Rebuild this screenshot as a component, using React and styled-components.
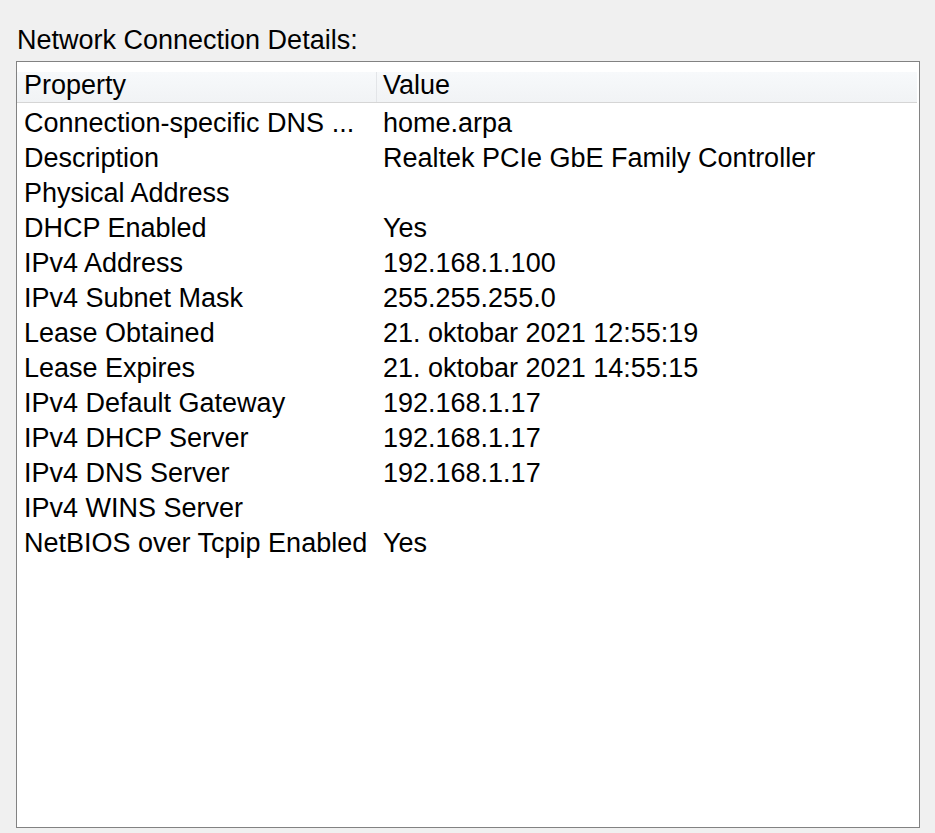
import React from 'react';
import styled, { createGlobalStyle } from "styled-components";

const Global = createGlobalStyle`
html, body {
  margin: 0;
  padding: 0;
  background: #f0f0f0;
}
`
const Pagina = styled.div`
display: flex;
flex-direction: column;
box-sizing: border-box;
height: 100vh;
padding: 25px 15px 5px 16px;
font-family: "Liberation Sans", Arial, sans-serif;
font-size: 27px;
color: #000;
`
const Titulo = styled.div`
line-height: 31px;
margin: 0 0 5px 1px;
`
const Caixa = styled.div`
flex: 1;
display: flex;
flex-direction: column;
background: #fff;
border: 1px solid #828282;
padding-top: 10px;
`
const Cabecalho = styled.div`
display: grid;
grid-template-columns: 360px 1fr;
margin-right: 2px;
background: linear-gradient(#f7f9fb, #f1f3f5);
border-bottom: 1px solid #d5d5d5;
`
const ColunaTitulo = styled.div`
height: 30px;
box-sizing: border-box;
line-height: 26px;
padding: 0 0 4px ${props => props.$divisor ? "7px" : "6px"};
border-right: ${props => props.$divisor ? "1px solid #e3e5e8" : "none"};
`
const Lista = styled.div`
padding-top: 3px;
`
const Linha = styled.div`
display: grid;
grid-template-columns: 360px 1fr;
line-height: 35px;
height: 35px;
`
const Celula = styled.div`
padding-left: ${props => props.$valor ? "6px" : "7px"};
white-space: nowrap;
overflow: hidden;
`

const dados = [
  ["Connection-specific DNS ...", "home.arpa"],
  ["Description", "Realtek PCIe GbE Family Controller"],
  ["Physical Address", ""],
  ["DHCP Enabled", "Yes"],
  ["IPv4 Address", "192.168.1.100"],
  ["IPv4 Subnet Mask", "255.255.255.0"],
  ["Lease Obtained", "21. oktobar 2021 12:55:19"],
  ["Lease Expires", "21. oktobar 2021 14:55:15"],
  ["IPv4 Default Gateway", "192.168.1.17"],
  ["IPv4 DHCP Server", "192.168.1.17"],
  ["IPv4 DNS Server", "192.168.1.17"],
  ["IPv4 WINS Server", ""],
  ["NetBIOS over Tcpip Enabled", "Yes"],
]

export default function App() {
  return (
    <Pagina>
      <Global />
      <Titulo>Network Connection Details:</Titulo>
      <Caixa>
        <Cabecalho>
          <ColunaTitulo $divisor>Property</ColunaTitulo>
          <ColunaTitulo>Value</ColunaTitulo>
        </Cabecalho>
        <Lista>
          {dados.map(([prop, valor]) => (
            <Linha key={prop}>
              <Celula>{prop}</Celula>
              <Celula $valor>{valor}</Celula>
            </Linha>
          ))}
        </Lista>
      </Caixa>
    </Pagina>
  )
}
